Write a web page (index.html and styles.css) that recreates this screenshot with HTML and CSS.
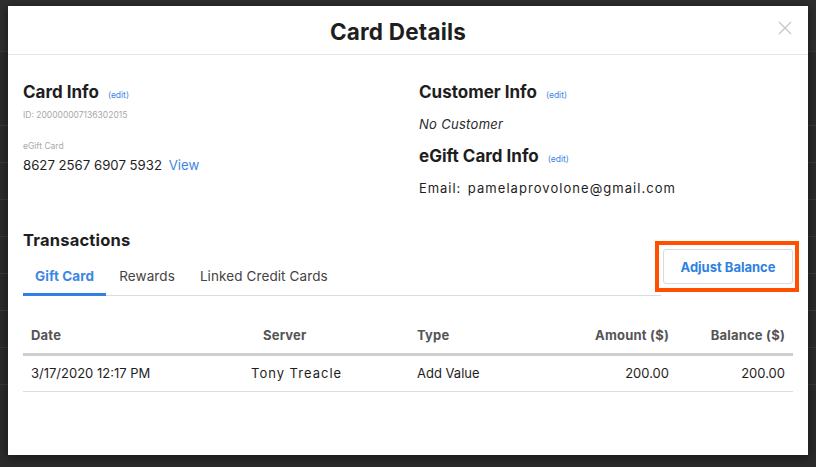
FILE: index.html
```html
<!DOCTYPE html>
<html>
<head>
<meta charset="utf-8">
<link rel="stylesheet" href="styles.css">
</head>
<body>
<div class="backdrop">
  <div class="bg-top"></div>
  <div class="bg-row first"></div>
  <div class="bg-row"></div>
  <div class="bg-row"></div>
  <div class="bg-row"></div>
  <div class="bg-row"></div>
  <div class="bg-row"></div>
  <div class="bg-row"></div>
  <div class="bg-row"></div>
</div>

<div class="modal">
  <div class="modal-header">
    <h1 class="modal-title">Card Details</h1>
    <svg class="close" width="14" height="14" viewBox="0 0 14 14"><path d="M1 1 L13 13 M13 1 L1 13" stroke="#c8c8c8" stroke-width="1.4" fill="none"/></svg>
  </div>
  <div class="modal-body">
    <div class="info-grid">
      <div class="col">
        <div class="heading-row"><h2 class="h2">Card Info</h2><span class="edit">(edit)</span></div>
        <div class="meta">ID: 200000007136302015</div>
        <div class="meta label">eGift Card</div>
        <div class="card-num">8627 2567 6907 5932 <span class="link">View</span></div>
      </div>
      <div class="col">
        <div class="heading-row"><h2 class="h2">Customer Info</h2><span class="edit">(edit)</span></div>
        <div class="no-cust">No Customer</div>
        <div class="heading-row second"><h2 class="h2">eGift Card Info</h2><span class="edit">(edit)</span></div>
        <div class="email">Email: <span class="addr">pamelaprovolone@gmail.com</span></div>
      </div>
    </div>

    <h3 class="tx-title">Transactions</h3>
    <div class="tabbar">
      <div class="tabs">
        <div class="tab active">Gift Card</div>
        <div class="tab">Rewards</div>
        <div class="tab">Linked Credit Cards</div>
      </div>
      <div class="highlight"><button class="btn">Adjust Balance</button></div>
    </div>

    <table class="tx">
      <thead>
        <tr>
          <th class="c-date">Date</th>
          <th class="c-server">Server</th>
          <th class="c-type">Type</th>
          <th class="c-amt">Amount ($)</th>
          <th class="c-bal">Balance ($)</th>
        </tr>
      </thead>
      <tbody>
        <tr>
          <td class="c-date">3/17/2020 12:17 PM</td>
          <td class="c-server srv">Tony Treacle</td>
          <td class="c-type">Add Value</td>
          <td class="c-amt">200.00</td>
          <td class="c-bal">200.00</td>
        </tr>
      </tbody>
    </table>
  </div>
</div>
</body>
</html>
```

FILE: styles.css
```css
* { box-sizing: border-box; }
html, body { margin: 0; padding: 0; }
body {
  width: 816px;
  height: 467px;
  overflow: hidden;
  background: #2b2b2b;
  font-family: Inter, "Liberation Sans", sans-serif;
  position: relative;
}

.backdrop {
  display: flex;
  flex-direction: column;
  height: 100%;
}
.bg-top {
  height: 52px;
  border-bottom: 1px solid #3a3a3a;
  background: #2e2e2e;
}
.bg-row {
  height: 37px;
  border-bottom: 1px solid #3a3a3a;
}
.bg-row.first { height: 74px; }

.modal {
  position: absolute;
  left: 8px;
  top: 6px;
  width: 800px;
  height: 449px;
  background: #fff;
  box-shadow: 0 2px 10px rgba(0,0,0,0.5);
}
.modal-header {
  height: 49px;
  padding: 2px 20px 0 0;
  border-bottom: 1px solid #e6e6ec;
  display: flex;
  align-items: center;
  justify-content: center;
  position: relative;
}
.modal-title {
  margin: 0;
  font-size: 22.5px;
  font-weight: 700;
  color: #1e1e1e;
  letter-spacing: 0.2px;
}
.close {
  position: absolute;
  right: 16px;
  top: 15px;
}

.modal-body {
  padding: 0 15px;
}
.info-grid {
  display: grid;
  grid-template-columns: 396px 1fr;
  padding-top: 27px;
}
.heading-row {
  display: flex;
  align-items: baseline;
  gap: 9px;
  height: 22px;
}
.heading-row.second { margin-top: 14px; }
.h2 {
  margin: 0;
  font-size: 17px;
  font-weight: 700;
  color: #1e1e1e;
}
.edit {
  font-size: 8.5px;
  color: #3d86e6;
}
.meta {
  font-size: 8.5px;
  color: #a8a8a8;
  margin-top: 6px;
}
.meta.label { margin-top: 21px; }
.card-num {
  font-size: 13.2px;
  color: #1e1e1e;
  margin-top: 6px;
}
.link { color: #3d86e6; margin-left: 3px; }
.no-cust {
  font-style: italic;
  font-size: 13px;
  color: #2a2a2a;
  margin-top: 12px;
  letter-spacing: 0.3px;
}
.email {
  font-size: 13px;
  color: #1e1e1e;
  margin-top: 12px;
  letter-spacing: 0.95px;
}
.addr { margin-left: 2px; letter-spacing: 1.05px; }

.tx-title {
  margin: 34px 0 0;
  font-size: 16.5px;
  font-weight: 700;
  color: #1e1e1e;
  height: 20px;
  letter-spacing: 0.2px;
}
.tabbar {
  display: flex;
  justify-content: space-between;
  align-items: flex-end;
  position: relative;
  margin-top: -9px;
}
.tabs {
  display: flex;
  flex: 1;
  border-bottom: 1px solid #dcdcdc;
  margin-right: -6px;
}
.tab {
  font-size: 13.5px;
  color: #444;
  padding: 0 12px;
  height: 36px;
  line-height: 32px;
  margin-bottom: -1px;
  letter-spacing: 0.1px;
}
.tab.active {
  color: #3d86e6;
  font-weight: 700;
  border-bottom: 3px solid #2f80e0;
}
.tab + .tab { padding-left: 13px; }
.highlight {
  border: 4px solid #ff5000;
  padding: 4px 2px 4px 4px;
  margin-right: -6px;
  margin-bottom: 4px;
  position: relative;
  z-index: 1;
}
.btn {
  display: block;
  width: 130px;
  height: 35px;
  background: #fff;
  border: 1px solid #dadae0;
  border-radius: 3px;
  color: #2f80e0;
  font-family: Inter, "Liberation Sans", sans-serif;
  font-weight: 700;
  font-size: 13px;
}

.tx {
  width: 100%;
  border-collapse: collapse;
  margin-top: 21px;
  table-layout: fixed;
}
.tx th {
  height: 37px;
  font-size: 13px;
  font-weight: 700;
  color: #555;
  border-bottom: 3px solid #cfcfcf;
  text-align: left;
  padding: 0 8px;
  letter-spacing: 0.2px;
}
.tx td {
  height: 37px;
  font-size: 13px;
  color: #1e1e1e;
  border-bottom: 1px solid #dedede;
  padding: 0 8px;
}
.c-date { width: 220px; }
.c-server { width: 166px; }
th.c-server { padding-left: 20px; }
.srv { letter-spacing: 1px; }
.c-type { width: 131px; }
.c-amt { width: 137px; text-align: right !important; }
.c-bal { width: 116px; text-align: right !important; }
```
